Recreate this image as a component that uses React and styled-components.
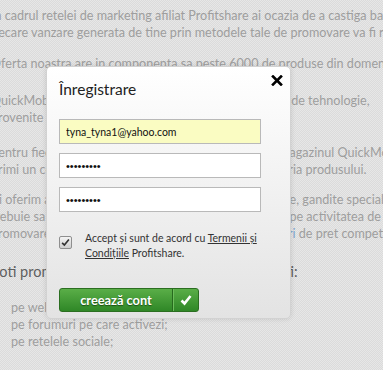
import React from "react";
import styled, { createGlobalStyle } from "styled-components";

const GlobalStyle = createGlobalStyle`
  html, body {
    margin: 0;
    padding: 0;
  }
  body {
    width: 383px;
    height: 370px;
    overflow: hidden;
  }
`;

const Page = styled.div`
  position: relative;
  width: 383px;
  height: 370px;
  overflow: hidden;
  background: repeating-conic-gradient(#dbdbdb 0 25%, #e7e7e7 0 50%) 0 0 / 2px 2px;
  font-family: Lato, "Open Sans", sans-serif;
`;

const Article = styled.div`
  margin-left: -9px;
  padding-top: 7px;
  font-size: 12.6px;
  line-height: 17px;
  color: #9e9e9e;
  white-space: nowrap;
`;

const Para = styled.p`
  margin: 0 0 ${(p) => p.$gap}px;
`;

const Lead = styled.p`
  margin: 0 0 18px;
  font-size: 14.5px;
  line-height: 19px;
  color: #5f5f5f;
`;

const Link = styled.span`
  color: #7ea6cf;
`;

const Ways = styled.ul`
  margin: 0;
  padding-left: 20px;
  list-style: none;
`;

const Dialog = styled.div`
  position: absolute;
  left: 46px;
  top: 66px;
  width: 245px;
  height: 253px;
  box-sizing: border-box;
  padding: 12px 0 0 12px;
  border: 1px solid #d2d2d2;
  border-radius: 5px;
  background: linear-gradient(#ffffff, #e3e3e3);
  box-shadow: 0 0 5px rgba(0, 0, 0, 0.12);
  font-family: Lato, "Open Sans", sans-serif;
`;

const Title = styled.h2`
  margin: 0;
  font-size: 15.5px;
  line-height: 20px;
  font-weight: normal;
  color: #222;
`;

const Close = styled.button`
  position: absolute;
  top: 8px;
  right: 7px;
  width: 12px;
  height: 11px;
  padding: 0;
  border: 0;
  background: none;
  display: flex;
  cursor: pointer;
`;

const Form = styled.form`
  margin-top: 20px;
  display: flex;
  flex-direction: column;
  gap: 9px;
`;

const Field = styled.input`
  width: 202px;
  height: 25px;
  box-sizing: border-box;
  padding: 0 6px;
  border: 1px solid #b9b9b9;
  background: ${(p) => (p.$filled ? "#fafcc2" : "#ffffff")};
  font-family: ${(p) => (p.$masked ? '"Liberation Sans", Arial' : 'Lato, "Open Sans"')}, sans-serif;
  font-size: ${(p) => (p.$masked ? "11px" : "10.5px")};
  color: #111;
  outline: none;
`;

const Terms = styled.label`
  margin-top: 10px;
  display: flex;
  align-items: flex-start;
  gap: 13px;
  font-size: 10.5px;
  line-height: 15px;
  color: #333;
`;

const Box = styled.span`
  margin-top: 5px;
  width: 11px;
  height: 11px;
  flex: none;
  display: flex;
  align-items: center;
  justify-content: center;
  border: 1px solid #8f8f8f;
  border-radius: 2px;
  background: linear-gradient(#f4f4f4, #cfcfcf);
`;

const TermsText = styled.span`
  width: 180px;
`;

const Underline = styled.span`
  text-decoration: underline;
`;

const Submit = styled.button`
  margin-top: 18px;
  width: 140px;
  height: 24px;
  padding: 0;
  display: flex;
  border: 1px solid #2b6e21;
  border-radius: 3px;
  background: linear-gradient(#5aae48, #2f8727);
  cursor: pointer;
  overflow: hidden;
`;

const SubmitLabel = styled.span`
  width: 112px;
  line-height: 22px;
  font-family: Lato, "Open Sans", sans-serif;
  font-size: 12.8px;
  font-weight: bold;
  color: #fff;
  text-shadow: 0 1px 1px #1c4f14;
  border-right: 1px solid #276a1e;
`;

const SubmitIcon = styled.span`
  flex: 1;
  display: flex;
  align-items: center;
  justify-content: center;
  border-left: 1px solid #6cbd5c;
`;

function Cross() {
  return (
    <svg width="12" height="11" viewBox="0 0 12 11">
      <path d="M2 1.5 L10 9.5 M10 1.5 L2 9.5" stroke="#000" strokeWidth="2.6" strokeLinecap="square" />
    </svg>
  );
}

function Tick({ color, size, weight }) {
  return (
    <svg width={size} height={size} viewBox="0 0 12 12">
      <path d="M1.5 6.5 L4.5 9.5 L10.5 2" fill="none" stroke={color} strokeWidth={weight} />
    </svg>
  );
}

const masked = "\u2022".repeat(9);

export default function App() {
  return (
    <>
      <GlobalStyle />
      <Page>
        <Article>
          <Para $gap={14}>
            În cadrul retelei de marketing afiliat Profitshare ai ocazia de a castiga bani frumosi.
            <br />
            fiecare vanzare generata de tine prin metodele tale de promovare va fi rasplatita.
          </Para>
          <Para $gap={20}>
            Oferta noastra are in componenta sa peste 6000 de produse din domeniul IT.
          </Para>
          <Para $gap={18}>
            QuickMobile este unul dintre cei mai mari comercianti de tehnologie,
            <br />
            provenite
          </Para>
          <Para $gap={13}>
            Pentru fiecare produs vandut prin intermediul tau in magazinul QuickMobile,
            <br />
            primi un comision frumos calculat in functie de categoria produsului.
          </Para>
          <Para $gap={20}>
            Iti oferim azi materiale de promovare variate si eficiente, gandite special
            <br />
            trebuie sa alegi doar ce crezi ca se potriveste mai bine pe activitatea de
            <br />
            promovare si sa trimiti vizitatorii catre <Link>oferte si reduceri</Link> de pret competitiv.
          </Para>
          <Lead>Poti promova produsele noastre oriunde doresti:</Lead>
          <Ways>
            <li>pe website-ul sau blogul tau;</li>
            <li>pe forumuri pe care activezi;</li>
            <li>pe retelele sociale;</li>
          </Ways>
        </Article>

        <Dialog>
          <Title>Înregistrare</Title>
          <Close aria-label="Închide">
            <Cross />
          </Close>
          <Form>
            <Field $filled type="text" defaultValue="tyna_tyna1@yahoo.com" />
            <Field $masked type="text" defaultValue={masked} />
            <Field $masked type="text" defaultValue={masked} />
            <Terms>
              <Box>
                <Tick color="#333" size={9} weight={2.2} />
              </Box>
              <TermsText>
                Accept și sunt de acord cu <Underline>Termenii și Condițiile</Underline> Profitshare.
              </TermsText>
            </Terms>
            <Submit type="button">
              <SubmitLabel>creează cont</SubmitLabel>
              <SubmitIcon>
                <Tick color="#fff" size={12} weight={2.6} />
              </SubmitIcon>
            </Submit>
          </Form>
        </Dialog>
      </Page>
    </>
  );
}
